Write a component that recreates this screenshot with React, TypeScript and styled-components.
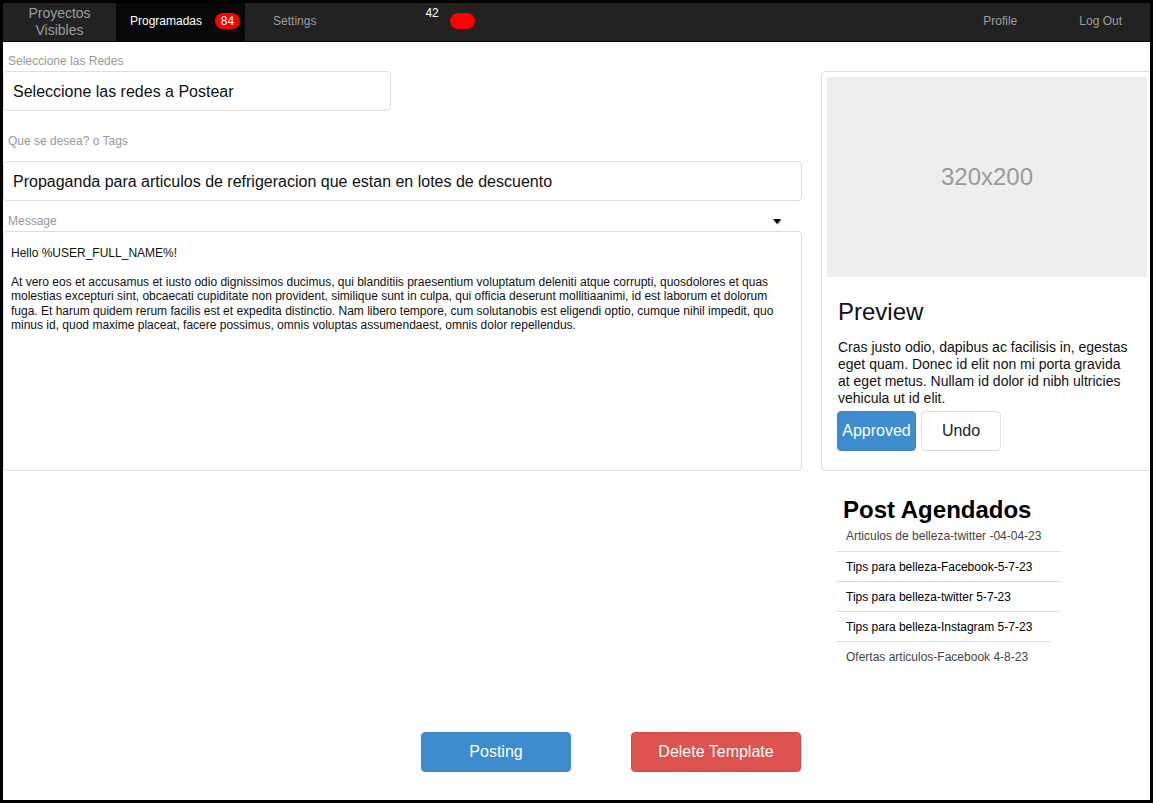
import React from "react"
import styled, { createGlobalStyle } from "styled-components"

const GlobalStyle = createGlobalStyle`
  html, body {
    margin: 0;
    padding: 0;
    background: #000;
  }
  body {
    font-family: "Liberation Sans", Arial, sans-serif;
  }
  * {
    box-sizing: border-box;
  }
`

const Frame = styled.div`
  width: 1153px;
  height: 803px;
  border: 3px solid #000;
  background: #fff;
  overflow: hidden;
`

// top bar
const Navbar = styled.nav`
  display: flex;
  align-items: stretch;
  height: 39px;
  background: #222;
  border-bottom: 1px solid #080808;
`

const Brand = styled.div`
  width: 113px;
  display: flex;
  align-items: center;
  justify-content: center;
  text-align: center;
  font-size: 14px;
  line-height: 17px;
  color: #9d9d9d;
`

const NavTab = styled.div<{ $active?: boolean; $pad?: string }>`
  display: flex;
  align-items: center;
  padding: ${p => p.$pad || "0 14px"};
  padding-bottom: 2px;
  font-size: 12px;
  color: ${p => (p.$active ? "#fff" : "#9d9d9d")};
  background: ${p => (p.$active ? "#080808" : "transparent")};
`

const Badge = styled.span`
  display: inline-flex;
  align-items: center;
  justify-content: center;
  min-width: 25px;
  height: 16px;
  padding: 0 4px;
  margin-left: 13px;
  border-radius: 8px;
  background: #f00;
  color: #fff;
  font-size: 12px;
`

const Counter = styled.div`
  display: flex;
  align-items: flex-start;
  padding-top: 3px;
  margin-left: 109px;
  font-size: 12px;
  color: #fff;
`

const Dot = styled.span`
  width: 25px;
  height: 16px;
  margin: 7px 0 0 11px;
  border-radius: 8px;
  background: #f00;
`

const Spacer = styled.div`
  flex: 1;
`

// content
const Main = styled.main`
  display: grid;
  grid-template-columns: 799px 331px;
  column-gap: 19px;
  align-items: start;
`

const FormColumn = styled.div`
  display: flex;
  flex-direction: column;
`

const Label = styled.label<{ $top: number; $bottom: number }>`
  display: block;
  margin: ${p => p.$top}px 0 ${p => p.$bottom}px 5px;
  font-size: 12px;
  line-height: 14px;
  color: #999;
`

const LabelRow = styled.div`
  display: flex;
  align-items: center;
  justify-content: space-between;
  padding-right: 21px;
  margin: 13px 0 3px 5px;
  font-size: 12px;
  line-height: 14px;
  color: #999;
`

const Caret = styled.span`
  width: 0;
  height: 0;
  border-left: 4px solid transparent;
  border-right: 4px solid transparent;
  border-top: 5px solid #000;
  filter: drop-shadow(1px 1px 0 #bbb);
`

const Field = styled.div<{ $width?: string }>`
  display: flex;
  align-items: center;
  width: ${p => p.$width || "100%"};
  height: 40px;
  padding: 1px 9px 0;
  border: 1px solid #ddd;
  border-radius: 4px;
  font-size: 16px;
  color: #111;
`

const MessageBox = styled.div`
  height: 240px;
  padding: 14px 7px;
  border: 1px solid #ddd;
  border-radius: 4px;
  font-size: 12px;
  line-height: 14.4px;
  color: #111;
  white-space: pre-wrap;
`

const SideColumn = styled.div`
  margin-top: 29px;
`

const Card = styled.div`
  width: 331px;
  height: 400px;
  padding: 5px;
  border: 1px solid #ddd;
  border-radius: 4px;
  display: flex;
  flex-direction: column;
`

const Placeholder = styled.div`
  width: 320px;
  height: 200px;
  flex: none;
  display: flex;
  align-items: center;
  justify-content: center;
  background: #eee;
  color: #9a9a9a;
  font-size: 24px;
`

const Caption = styled.div`
  padding: 9px 16px 9px 10px;
`

const CardTitle = styled.h3`
  margin: 12px 0 14px 1px;
  font-size: 24px;
  font-weight: normal;
  line-height: 27px;
  color: #111;
`

const CardText = styled.p`
  margin: 0 0 4px 1px;
  font-size: 14px;
  line-height: 17px;
  color: #111;
`

const ButtonRow = styled.div`
  display: flex;
  gap: 5px;
`

const Button = styled.button<{ $variant?: "primary" | "danger" | "default"; $width: number }>`
  width: ${p => p.$width}px;
  height: 40px;
  padding: 0;
  border-radius: 4px;
  font-family: inherit;
  font-size: 16px;
  cursor: pointer;
  border: 1px solid
    ${p => (p.$variant === "primary" ? "#3a85c6" : p.$variant === "danger" ? "#d64a45" : "#ddd")};
  background: ${p =>
    p.$variant === "primary" ? "#3e8bce" : p.$variant === "danger" ? "#dc534f" : "#fff"};
  color: ${p => (p.$variant === "default" ? "#222" : "#fff")};
`

const Scheduled = styled.section`
  padding-left: 15px;
`

const ScheduledTitle = styled.h2`
  margin: 28px 0 0 7px;
  font-size: 24px;
  font-weight: bold;
  line-height: 22px;
  color: #000;
`

const List = styled.ul`
  list-style: none;
  margin: 0;
  padding: 0;
  width: 225px;
`

const Item = styled.li<{ $muted?: boolean; $narrow?: boolean }>`
  height: 30px;
  display: flex;
  align-items: center;
  padding-left: 10px;
  font-size: 12px;
  color: ${p => (p.$muted ? "#444" : "#000")};
  width: ${p => (p.$narrow ? "215px" : "225px")};
  & + & {
    border-top: 1px solid #ddd;
  }
`

const Footer = styled.div`
  display: flex;
  gap: 60px;
  margin-top: 61px;
  padding-left: 418px;
`

const message = `Hello %USER_FULL_NAME%!

At vero eos et accusamus et iusto odio dignissimos ducimus, qui blanditiis praesentium voluptatum deleniti atque corrupti, quosdolores et quas molestias excepturi sint, obcaecati cupiditate non provident, similique sunt in culpa, qui officia deserunt mollitiaanimi, id est laborum et dolorum fuga. Et harum quidem rerum facilis est et expedita distinctio. Nam libero tempore, cum solutanobis est eligendi optio, cumque nihil impedit, quo minus id, quod maxime placeat, facere possimus, omnis voluptas assumendaest, omnis dolor repellendus.`

const posts = [
  { text: "Articulos de belleza-twitter -04-04-23", muted: true },
  { text: "Tips para belleza-Facebook-5-7-23" },
  { text: "Tips para belleza-twitter 5-7-23" },
  { text: "Tips para belleza-Instagram 5-7-23" },
  { text: "Ofertas articulos-Facebook 4-8-23", muted: true, narrow: true },
]

export default function App() {
  return (
    <>
      <GlobalStyle />
      <Frame>
        <Navbar>
          <Brand>
            Proyectos
            <br />
            Visibles
          </Brand>
          <NavTab $active $pad="0 5px 0 14px">
            Programadas
            <Badge>84</Badge>
          </NavTab>
          <NavTab $pad="0 0 0 28px">Settings</NavTab>
          <Counter>
            42
            <Dot />
          </Counter>
          <Spacer />
          <NavTab $pad="0 0 0 0">Profile</NavTab>
          <NavTab $pad="0 28px 0 62px">Log Out</NavTab>
        </Navbar>

        <Main>
          <FormColumn>
            <Label $top={12} $bottom={3}>Seleccione las Redes</Label>
            <Field $width="388px">Seleccione las redes a Postear</Field>
            <Label $top={23} $bottom={13}>Que se desea? o Tags</Label>
            <Field>Propaganda para articulos de refrigeracion que estan en lotes de descuento</Field>
            <LabelRow>
              <span>Message</span>
              <Caret />
            </LabelRow>
            <MessageBox>{message}</MessageBox>
          </FormColumn>

          <SideColumn>
            <Card>
              <Placeholder>320x200</Placeholder>
              <Caption>
                <CardTitle>Preview</CardTitle>
                <CardText>
                  Cras justo odio, dapibus ac facilisis in, egestas eget quam. Donec id elit non mi
                  porta gravida at eget metus. Nullam id dolor id nibh ultricies vehicula ut id elit.
                </CardText>
                <ButtonRow>
                  <Button $variant="primary" $width={79}>Approved</Button>
                  <Button $variant="default" $width={80}>Undo</Button>
                </ButtonRow>
              </Caption>
            </Card>
            <Scheduled>
              <ScheduledTitle>Post Agendados</ScheduledTitle>
              <List>
                {posts.map(p => (
                  <Item key={p.text} $muted={p.muted} $narrow={p.narrow}>
                    {p.text}
                  </Item>
                ))}
              </List>
            </Scheduled>
          </SideColumn>
        </Main>

        <Footer>
          <Button $variant="primary" $width={150}>Posting</Button>
          <Button $variant="danger" $width={170}>Delete Template</Button>
        </Footer>
      </Frame>
    </>
  )
}
